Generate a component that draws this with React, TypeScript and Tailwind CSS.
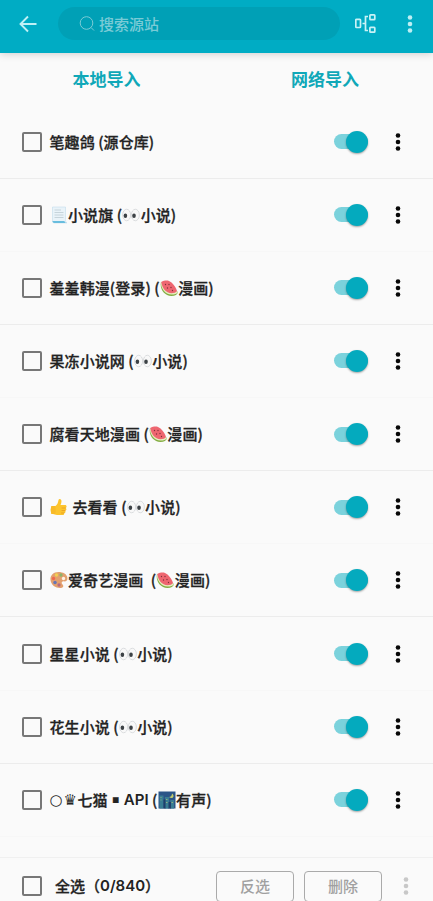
import React, { ReactNode } from 'react';

type EmojiProps = { children: ReactNode; label: string };

function Emoji({ children, label }: EmojiProps) {
  return (
    <svg role="img" aria-label={label} viewBox="0 0 36 36" className="mr-[0.5px] h-[18px] w-[18px] shrink-0">
      {children}
    </svg>
  );
}

const Eyes = () => (
  <Emoji label="eyes">
    <ellipse cx="9.3" cy="18" rx="8" ry="11.5" fill="#f8f8f8" stroke="#d0d3d6" strokeWidth="1.5" />
    <ellipse cx="26.7" cy="18" rx="8" ry="11.5" fill="#f8f8f8" stroke="#d0d3d6" strokeWidth="1.5" />
    <ellipse cx="6.8" cy="19.5" rx="3.6" ry="4.4" fill="#3c4145" />
    <ellipse cx="24" cy="19.5" rx="3.6" ry="4.4" fill="#3c4145" />
  </Emoji>
);

const Melon = () => (
  <Emoji label="watermelon">
    <path d="M2 6C-1 19 8 34 23 34c7 0 12-3 13-8z" fill="#83ad42" />
    <path d="M2 6C1 18 10 31 23 31c6 0 11-1 13-5z" fill="#e6edc0" />
    <path d="M2.500 6C8 3 14 2.500 18 4c7 3 13 11 16 20-2 3-6 4.500-11 4.500C12 28.500 4 18 2.500 6z" fill="#ee6670" />
    <g fill="#7b3038">
      <circle cx="11" cy="11" r="1.300" />
      <circle cx="18" cy="11" r="1.300" />
      <circle cx="15" cy="18" r="1.300" />
      <circle cx="22" cy="17" r="1.300" />
      <circle cx="25" cy="23" r="1.300" />
    </g>
  </Emoji>
);

const Page = () => (
  <Emoji label="page">
    <path d="M5 2h26v25c0 4 1 6 3 7H9c-3 0-4-2-4-6z" fill="#e9f3f9" stroke="#b9d7e8" strokeWidth="1" />
    <path d="M5 30h24c0 2 2 4 5 4H9c-3 0-4-2-4-4z" fill="#68bdde" />
    <path d="M9 8h13M9 13h18M9 18h18M9 23h18" stroke="#b4c2cb" strokeWidth="1.300" />
  </Emoji>
);

const Thumb = () => (
  <Emoji label="thumbs up">
    <path d="M3 16h8c4-3 5-7 6-12 1-4 6-2 6 2 0 3-1 6-2 8h9c4 0 4 5 1 6 3 1 2 5-1 5 2 2 1 5-2 5 1 2 0 4-3 4H14c-4 0-5-2-8-2H3c-2-5-2-11 0-16z" fill="#fcc42d" />
    <path d="M24 20h7M24 25h6M23 30h5" stroke="#e79b22" strokeWidth="1.500" strokeLinecap="round" />
    <path d="M3 16h7c2 6 2 11 0 16H3c-2-5-2-11 0-16z" fill="#f8ba27" />
  </Emoji>
);

const Palette = () => (
  <Emoji label="palette">
    <path d="M17 2C7 2 0 9 1 18c1 10 10 16 19 16 8 0 8-5 4-8-2-4 1-6 5-5 4 0 6-3 6-7C34 6 26 2 17 2z" fill="#e3a06e" />
    <circle cx="22" cy="8" r="3.300" fill="#8bb46a" />
    <circle cx="13" cy="8" r="3.300" fill="#f2cf50" />
    <circle cx="7" cy="15" r="3.300" fill="#ee674e" />
    <circle cx="10" cy="23" r="3.500" fill="#6575b8" />
    <circle cx="18" cy="28" r="3.300" fill="#b76a80" />
    <circle cx="27" cy="15" r="3.300" fill="#fff2e3" />
  </Emoji>
);

const Night = () => (
  <Emoji label="night city">
    <path d="M1 1h34v34H1z" fill="#2b5588" />
    <path d="M3 9h8v26H3zM14 12h8v23h-8zM25 18h7v17h-7z" fill="#397d93" />
    <path d="M11 17h4v18h-4zM21 22h5v13h-5z" fill="#203f6b" />
    <path d="M28 5c0 5-3 7-6 7 4 4 10 2 9-3-1-2-1-3-3-4z" fill="#c1cc6d" />
    <path d="M5 13h2M5 18h2M16 17h3M16 23h3M27 23h3" stroke="#8daf82" strokeWidth="2" />
  </Emoji>
);

const sources: ReactNode[] = [
  <>笔趣鸽 (源仓库)</>,
  <><Page />小说旗 (<Eyes />小说)</>,
  <>羞羞韩漫(登录) (<Melon />漫画)</>,
  <>果冻小说网 (<Eyes />小说)</>,
  <>腐看天地漫画 (<Melon />漫画)</>,
  <><Thumb /><span className="ml-[1px]"> 去看看 (</span><Eyes />小说)</>,
  <><Palette />爱奇艺漫画<span className="ml-[4px]">{' ('}</span><Melon />漫画)</>,
  <>星星小说 (<Eyes />小说)</>,
  <>花生小说 (<Eyes />小说)</>,
  <>
    <span className="w-[14px] font-['DejaVu_Sans'] text-[15px] font-normal [-webkit-text-stroke:0]">○</span>
    <span className="w-[14px] font-['DejaVu_Sans'] text-[15px] [-webkit-text-stroke:0]">♛</span>
    七猫<span className="w-[16px] text-center font-['DejaVu_Sans'] text-[11px]">▪</span>
    <span className="font-['Inter'] text-[15px] font-semibold [-webkit-text-stroke:0]">API</span> (<Night />有声)
  </>,
];

const Checkbox = () => (
  <span role="checkbox" aria-checked="false" className="ml-[22px] h-5 w-5 shrink-0 rounded-[2px] border-2 border-[#777]" />
);

function Dots({ className }: { className: string }) {
  return (
    <svg viewBox="0 0 6 20" className={`h-5 w-1.5 shrink-0 ${className}`} fill="currentColor">
      <circle cx="3" cy="3.500" r="2.300" />
      <circle cx="3" cy="10" r="2.300" />
      <circle cx="3" cy="16.500" r="2.300" />
    </svg>
  );
}

const Toggle = () => (
  <span role="switch" aria-checked="true" className="flex h-[15px] w-[34px] shrink-0 items-center justify-end rounded-full bg-[#7bd2dc]">
    <span className="h-[22px] w-[22px] shrink-0 rounded-full bg-[#04aabe] shadow-[0_1px_2px_rgba(0,0,0,0.35)]" />
  </span>
);

export default function App() {
  return (
    <div className="flex h-[901px] w-[433px] flex-col overflow-hidden bg-[#fafafa] font-['Noto_Sans_CJK_SC',sans-serif] text-[#222]">
      <header className="z-10 flex h-[53px] shrink-0 items-start bg-[#00acc4] shadow-[0_1px_8px_rgba(0,0,0,0.18)]">
        <svg viewBox="0 0 18 18" className="mt-[15px] ml-[19px] h-[18px] w-[18px]" fill="none" stroke="#bff0f5" strokeWidth="1.900">
          <path d="M17.500 9H2M9 1.500 1.500 9 9 16.500" />
        </svg>
        <div className="mt-[7px] ml-[21px] flex h-[33px] w-[282px] items-center rounded-full bg-[#00a0b6] text-[#7acbd6]">
          <svg viewBox="0 0 16 16" className="ml-[21px] h-4 w-4" fill="none" stroke="currentColor" strokeWidth="1">
            <circle cx="7.500" cy="7" r="6.300" />
            <path d="m12 11.500 3 3" />
          </svg>
          <span className="ml-[4px] text-[15px] leading-5 font-medium">搜索源站</span>
        </div>
        <svg viewBox="0 0 22 20" className="mt-[14px] ml-[15px] h-5 w-[22px]" fill="none" stroke="#c9f2f6" strokeWidth="1.700">
          <rect x="0.800" y="5.300" width="4.700" height="8.200" rx="0.700" />
          <path d="M7.500 9.500h2.700M13 2.500h-2.500v14H13" />
          <rect x="14.900" y="0.900" width="4.900" height="4.700" rx="0.700" />
          <rect x="14.900" y="13.400" width="4.900" height="4.700" rx="0.700" />
        </svg>
        <Dots className="mt-[14px] ml-[30px] text-[#bceff4]" />
      </header>

      <nav className="flex h-[52.500px] shrink-0 items-center text-[17px] font-bold text-[#0fa8b8]">
        <button className="w-[213px] text-center leading-6">本地导入</button>
        <button className="ml-[4px] w-[216px] text-center leading-6">网络导入</button>
      </nav>

      <main className="h-[751.500px] shrink-0">
        {sources.map((name, index) => (
          <div key={index} className="flex h-[73.150px] items-center border-b border-[#f7f7f7] odd:border-[#ececec]">
            <Checkbox />
            <div className="ml-[7.500px] flex w-[284.500px] items-center text-[15px] leading-5 font-medium tracking-[0.080px] whitespace-pre [-webkit-text-stroke:0.3px_#222]">{name}</div>
            <Toggle />
            <Dots className="ml-[26.500px] text-[#080808]" />
          </div>
        ))}
      </main>

      <footer className="flex h-[57px] shrink-0 items-center border-t border-[#f0f0f0]">
        <Checkbox />
        <span className="ml-[13px] flex w-[161px] items-center text-[15px] leading-5 font-medium whitespace-nowrap [-webkit-text-stroke:0.3px_#222]">
          全选（<span className="font-['Inter'] font-semibold [-webkit-text-stroke:0]">0/840</span>）
        </span>
        <button className="h-[31px] w-[78px] shrink-0 rounded-[4px] border border-[#aaa] text-[15px] leading-5 font-medium text-[#a0a0a0]">反选</button>
        <button className="ml-[10px] h-[31px] w-[78px] shrink-0 rounded-[4px] border border-[#aaa] text-[15px] leading-5 font-medium text-[#a0a0a0]">删除</button>
        <Dots className="ml-[21px] text-[#c8c8c8]" />
      </footer>
    </div>
  );
}
